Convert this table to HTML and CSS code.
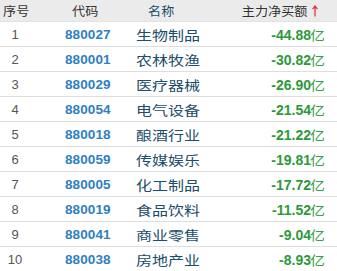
FILE: index.html
```html
<!DOCTYPE html>
<html lang="zh">
<head>
<meta charset="utf-8">
<link rel="stylesheet" href="styles.css">
</head>
<body>
<div class="board">
  <div class="row head">
    <div class="c-no"><span class="zh">序号</span></div>
    <div class="c-code"><span class="zh">代码</span></div>
    <div class="c-name"><span class="zh">名称</span></div>
    <div class="c-amt"><span class="zh">主力净买额</span><svg class="arrow" width="6" height="12" viewBox="0 0 6 12"><path d="M3 1 L3 11.5 M0.6 4.2 L3 1 L5.4 4.2" fill="none" stroke="#e8334a" stroke-width="1.3"/></svg></div>
  </div>
  <div class="row"><div class="c-no">1</div><div class="c-code">880027</div><div class="c-name"><span class="zh">生物制品</span></div><div class="c-amt"><b>-44.88</b><span class="yi">亿</span></div></div>
  <div class="row"><div class="c-no">2</div><div class="c-code">880001</div><div class="c-name"><span class="zh">农林牧渔</span></div><div class="c-amt"><b>-30.82</b><span class="yi">亿</span></div></div>
  <div class="row"><div class="c-no">3</div><div class="c-code">880029</div><div class="c-name"><span class="zh">医疗器械</span></div><div class="c-amt"><b>-26.90</b><span class="yi">亿</span></div></div>
  <div class="row"><div class="c-no">4</div><div class="c-code">880054</div><div class="c-name"><span class="zh">电气设备</span></div><div class="c-amt"><b>-21.54</b><span class="yi">亿</span></div></div>
  <div class="row"><div class="c-no">5</div><div class="c-code">880018</div><div class="c-name"><span class="zh">酿酒行业</span></div><div class="c-amt"><b>-21.22</b><span class="yi">亿</span></div></div>
  <div class="row"><div class="c-no">6</div><div class="c-code">880059</div><div class="c-name"><span class="zh">传媒娱乐</span></div><div class="c-amt"><b>-19.81</b><span class="yi">亿</span></div></div>
  <div class="row"><div class="c-no">7</div><div class="c-code">880005</div><div class="c-name"><span class="zh">化工制品</span></div><div class="c-amt"><b>-17.72</b><span class="yi">亿</span></div></div>
  <div class="row"><div class="c-no">8</div><div class="c-code">880019</div><div class="c-name"><span class="zh">食品饮料</span></div><div class="c-amt"><b>-11.52</b><span class="yi">亿</span></div></div>
  <div class="row"><div class="c-no">9</div><div class="c-code">880041</div><div class="c-name"><span class="zh">商业零售</span></div><div class="c-amt"><b>-9.04</b><span class="yi">亿</span></div></div>
  <div class="row last"><div class="c-no">10</div><div class="c-code">880038</div><div class="c-name"><span class="zh">房地产业</span></div><div class="c-amt"><b>-8.93</b><span class="yi">亿</span></div></div>
</div>
</body>
</html>
```

FILE: styles.css
```css
html, body {
  margin: 0;
  padding: 0;
  background: #ffffff;
}
.board {
  width: 337px;
  font-family: "Liberation Sans", "Noto Sans CJK SC", sans-serif;
}
.row {
  display: grid;
  grid-template-columns: 42px 88px 100px 107px;
  height: 24px;
  align-items: center;
  border-bottom: 1px solid #dedede;
  background: #ffffff;
}
.row.last {
  border-bottom: none;
}
.c-no {
  font-size: 13px;
  color: #555555;
  padding-right: 12px;
  text-align: center;
}
.c-code {
  font-size: 13.5px;
  font-weight: bold;
  color: #2f80bf;
  padding-left: 23px;
  letter-spacing: 0.1px;
}
.c-name {
  padding-left: 6px;
}
.c-name .zh {
  font-size: 13px;
  color: #1c4d6c;
  transform: scaleX(1.23);
  transform-origin: left center;
}
.c-amt {
  text-align: right;
  padding-right: 12px;
  color: #2c9a3a;
  white-space: nowrap;
}
.c-amt b {
  font-size: 14px;
  font-weight: bold;
}
.zh {
  font-family: "Noto Sans CJK SC", sans-serif;
  display: inline-block;
}
.yi {
  font-family: "Noto Sans CJK SC", sans-serif;
  font-size: 13px;
  display: inline-block;
  transform: scaleX(1.15);
  transform-origin: right center;
  margin-left: 1px;
  color: #38a045;
}

/* header row */
.row.head {
  height: 21px;
  background: #ebebeb;
  border-bottom: 1px solid #e2e2e2;
}
.head > div {
  color: #333333;
  font-weight: normal;
  padding-right: 0;
}
.head .zh {
  font-size: 12.5px;
  transform: scaleX(1.05);
  transform-origin: left center;
}
.head .c-no {
  text-align: left;
  padding-left: 3px;
}
.head .c-code {
  text-align: left;
  padding-left: 30px;
}
.head .c-name {
  text-align: left;
  padding-left: 18px;
}
.head .c-amt {
  display: flex;
  justify-content: flex-end;
  align-items: center;
  gap: 4px;
  padding-right: 19px;
}
.head .c-amt .zh {
  transform-origin: right center;
}
.arrow {
  display: block;
}
```
